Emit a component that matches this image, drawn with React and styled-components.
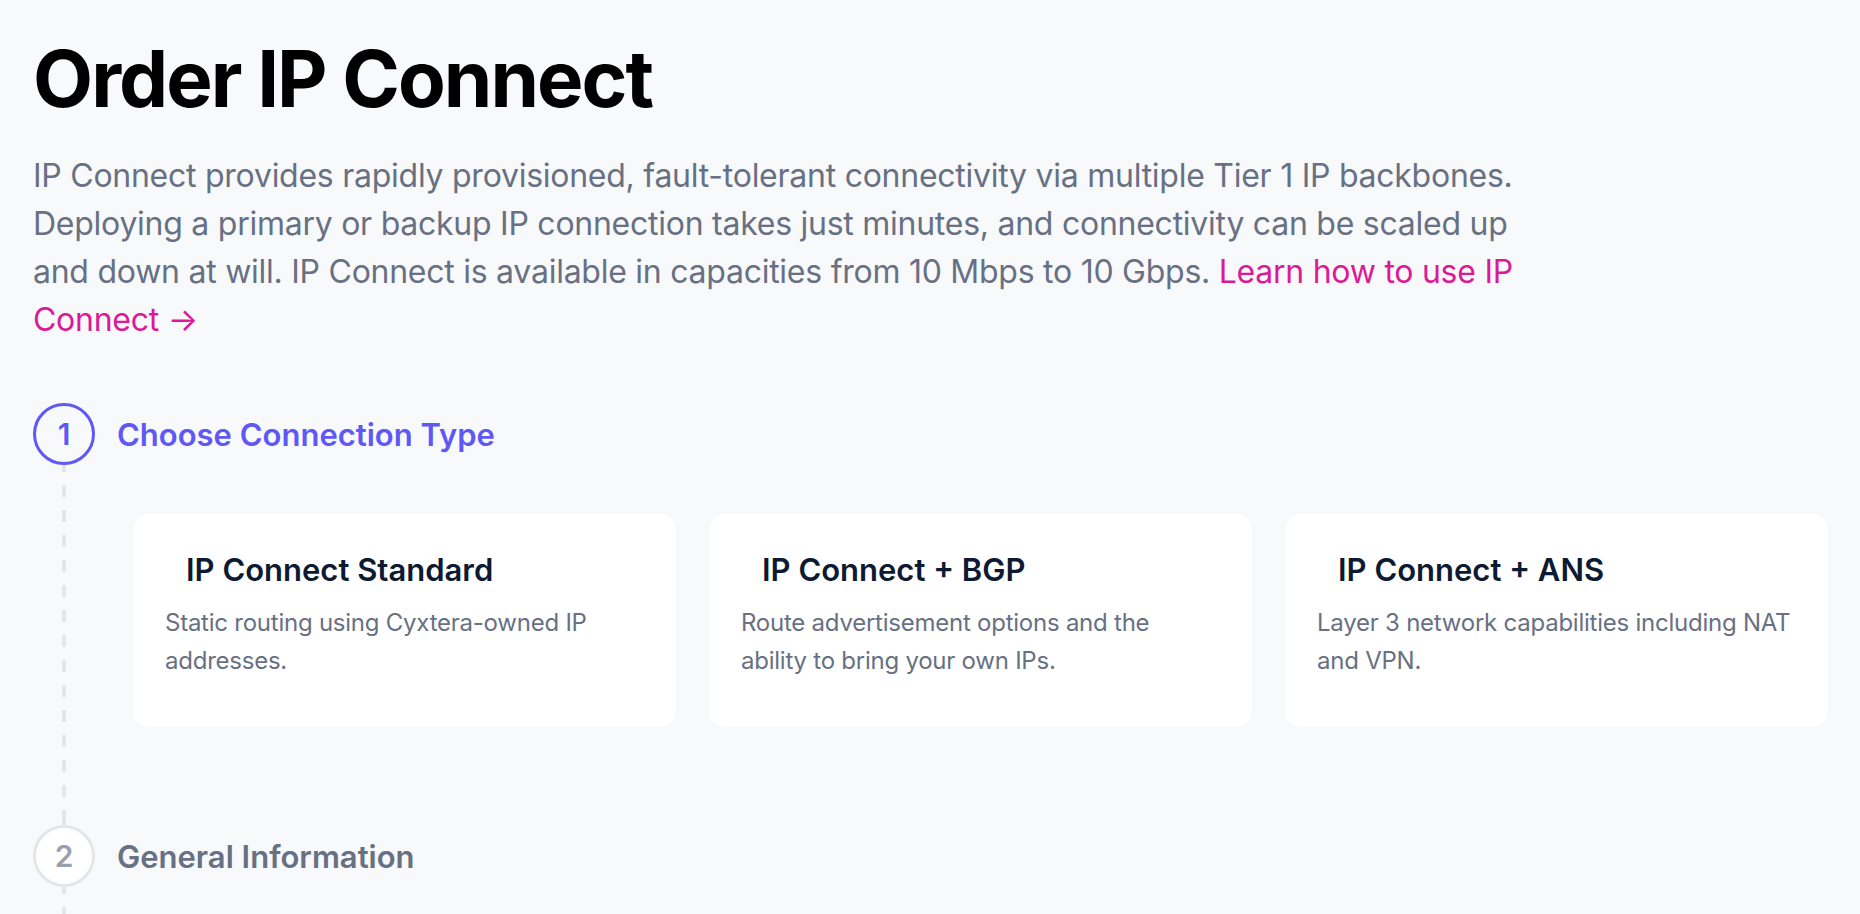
import React from "react";
import styled, { createGlobalStyle } from "styled-components";

const GlobalStyle = createGlobalStyle`
  html, body { margin: 0; padding: 0; background: #f8f9fb; }
  body { font-family: Inter, "Noto Sans", sans-serif; -webkit-font-smoothing: antialiased; }
  * { box-sizing: border-box; }
`;

const Page = styled.main`
  padding: 40px 32px 0 33px;
`;

const Title = styled.h1`
  margin: 0;
  font: 700 78px/1 Inter, sans-serif;
  letter-spacing: -0.025em;
  color: #000;
`;

const Intro = styled.p`
  margin: 34px 0 0;
  max-width: 1530px;
  font: 400 32px/48px Inter, sans-serif;
  letter-spacing: -0.008em;
  color: #687083;
`;

const Link = styled.a`
  color: #db1a98;
  text-decoration: none;
`;

const Steps = styled.ol`
  list-style: none;
  margin: 59px 0 0;
  padding: 0;
`;

const Step = styled.li`
  display: grid;
  grid-template-columns: 62px 1fr;
  column-gap: 22px;
`;

const Rail = styled.div`
  display: flex;
  flex-direction: column;
  align-items: center;
`;

const Circle = styled.div`
  width: 62px;
  height: 62px;
  flex: none;
  border-radius: 50%;
  border: 3px solid ${(p) => (p.$active ? "#5f58f5" : "#e4e6ea")};
  background: ${(p) => (p.$active ? "transparent" : "#fff")};
  color: ${(p) => (p.$active ? "#5f58f5" : "#9aa0ab")};
  display: flex;
  align-items: center;
  justify-content: center;
  font: 600 30px/1 Inter, sans-serif;
`;

const Line = styled.div`
  flex: 1;
  width: 4px;
  background: repeating-linear-gradient(
    to bottom,
    #e3e5e9 0 12px,
    transparent 12px 25px
  );
  background-position: 0 -5px;
`;

const Body = styled.div`
  min-width: 0;
  padding-bottom: ${(p) => p.$pad}px;
`;

const Heading = styled.h2`
  margin: 0;
  height: 62px;
  display: flex;
  align-items: center;
  font: 600 31px/1 Inter, sans-serif;
  color: ${(p) => (p.$active ? "#5f58f5" : "#687083")};
`;

const Cards = styled.div`
  display: grid;
  grid-template-columns: repeat(3, 1fr);
  gap: 33px;
  margin: 49px 0 0 16px;
`;

const Card = styled.div`
  background: #fff;
  border-radius: 16px;
  padding: 36px 34px 47px 32px;
`;

const CardTitle = styled.h3`
  margin: 0 0 14px 21px;
  font: 600 31px/40px Inter, sans-serif;
  color: #0e1a31;
`;

const CardText = styled.p`
  margin: 0;
  font: 400 24px/38px Inter, sans-serif;
  letter-spacing: -0.01em;
  color: #687083;
`;

const options = [
  {
    title: "IP Connect Standard",
    text: "Static routing using Cyxtera-owned IP addresses.",
  },
  {
    title: "IP Connect + BGP",
    text: "Route advertisement options and the ability to bring your own IPs.",
  },
  {
    title: "IP Connect + ANS",
    text: "Layer 3 network capabilities including NAT and VPN.",
  },
];

export default function App() {
  return (
    <>
      <GlobalStyle />
      <Page>
        <Title>Order IP Connect</Title>
        <Intro>
          IP Connect provides rapidly provisioned, fault-tolerant connectivity via
          multiple Tier 1 IP backbones. Deploying a primary or backup IP connection
          takes just minutes, and connectivity can be scaled up and down at will. IP
          Connect is available in capacities from 10 Mbps to 10 Gbps.{" "}
          <Link href="#">Learn how to use IP Connect →</Link>
        </Intro>
        <Steps>
          <Step>
            <Rail>
              <Circle $active>1</Circle>
              <Line />
            </Rail>
            <Body $pad={98}>
              <Heading $active>Choose Connection Type</Heading>
              <Cards>
                {options.map((o) => (
                  <Card key={o.title}>
                    <CardTitle>{o.title}</CardTitle>
                    <CardText>{o.text}</CardText>
                  </Card>
                ))}
              </Cards>
            </Body>
          </Step>
          <Step>
            <Rail>
              <Circle>2</Circle>
              <Line />
            </Rail>
            <Body $pad={98}>
              <Heading>General Information</Heading>
            </Body>
          </Step>
        </Steps>
      </Page>
    </>
  );
}
